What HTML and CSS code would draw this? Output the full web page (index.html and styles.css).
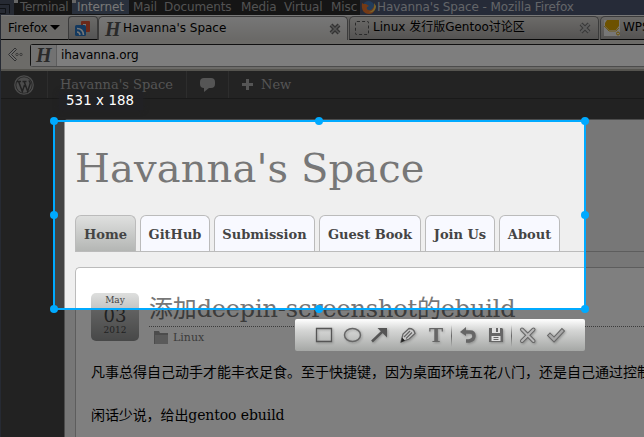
FILE: index.html
```html
<!DOCTYPE html>
<html lang="en">
<head>
<meta charset="utf-8">
<title>Havanna's Space</title>
<link rel="stylesheet" href="styles.css">
</head>
<body>
<div class="desktop">
  <header class="panel">
    <svg class="panel-glyph" width="14" height="15"><path d="M0 4.500h9.500v9M0 8.500h5.500v5H0" fill="none" stroke="#20242c"/></svg>
    <span class="tag w-terminal dot">Terminal</span>
    <span class="tag w-internet active dot">Internet</span>
    <span class="tag w-mail">Mail</span>
    <span class="tag w-docs">Documents</span>
    <span class="tag w-media">Media</span>
    <span class="tag w-virtual">Virtual</span>
    <span class="tag w-misc">Misc</span>
    <span class="window-title">
      <svg width="15" height="15" viewBox="0 0 15 15"><circle cx="7.500" cy="7" r="6" fill="#4578b5"/><path d="M1 3C0 10 3 14 8 14c5 0 7-5 5.500-10C13 7 12 9 10 10 7 11 5 9 6 7l2-1-3-2C3 4 2 4 1 3Z" fill="#e8742c"/><path d="M13 3c1 5-1 8-5 9 3 1 7-1 7-6Z" fill="#f5cb55"/></svg>
      <span>Havanna's Space - Mozilla Firefox</span>
    </span>
  </header>

  <main class="browser">
    <div class="tabs">
      <div class="menu-button">Firefox<i class="caret"></i></div>
      <div class="pin-tab">
        <svg width="16" height="17" viewBox="0 0 16 17"><path d="M7 1h7q1 0 1 1v9q0 1-1 1H8V8L6 6V2q0-1 1-1Z" fill="#d85235"/><path d="M8 4h3v3H8Z" fill="#eee"/><rect x="0" y="5" width="11" height="11" rx="1.500" fill="#2672bf"/><path d="M2 8.500q6 0 6.500 6.500M2 12q2.500 0 3 3" stroke="#eee" stroke-width="1.600" fill="none"/></svg>
      </div>
      <div class="tab tab-current"><b class="h-icon">H</b><span class="tab-name">Havanna's Space</span>
        <svg class="close" width="12" height="12" viewBox="0 0 12 12"><path d="M2 2l8 8M10 2L2 10" stroke="#666" stroke-width="4"/><path d="M2 2l8 8M10 2L2 10" stroke="#aaa" stroke-width="1.500"/></svg>
      </div>
      <div class="tab tab-linux"><i class="blank-icon"></i><span class="tab-name">Linux 发行版Gentoo讨论区</span>
        <svg class="close" width="12" height="12" viewBox="0 0 12 12"><path d="M2 2l8 8M10 2L2 10" stroke="#707070" stroke-width="4"/><path d="M2 2l8 8M10 2L2 10" stroke="#bbb" stroke-width="2"/></svg>
      </div>
      <div class="tab tab-wps">
        <svg width="16" height="16" viewBox="0 0 16 16"><path d="M0 0h16v16H0Z" fill="#eee"/><path d="M3 0h12v6l-3 4H5L1 6V3Z" fill="#dba400"/><path d="M0 6l5 5h7l3-3" fill="none" stroke="#dba400" stroke-width=".8"/><circle cx="14" cy="13.500" r="1.500" fill="none" stroke="#dba400"/></svg>
        <span class="tab-name">WPS</span>
      </div>
    </div>
    <div class="navbar">
      <svg class="back" width="17" height="16" viewBox="0 0 17 16"><path d="M8 1L1.500 7.500 8 14l1.500-1.500-5-5 5-5Z" fill="#ddd" stroke="#626262"/><circle cx="10" cy="7.500" r="1.200" fill="none" stroke="#777"/><circle cx="14" cy="7.500" r="1.200" fill="none" stroke="#777"/></svg>
      <div class="address"><b class="h-icon address-icon">H</b><span class="url">ihavanna.org</span></div>
    </div>

    <div class="adminbar">
      <div class="admin-logo">
        <svg width="20" height="20" viewBox="0 0 20 20"><circle cx="10" cy="10" r="9.200" fill="none" stroke="#999" stroke-width="1.300"/><circle cx="10" cy="10" r="7.700" fill="#999"/><path d="M3 6.500h4M8.500 6.500h4M4.800 7l3.500 9.500L10.500 10M10.300 7l3.400 9.500 2.500-8q0-2-1.500-3" fill="none" stroke="#444" stroke-width="1.500"/></svg>
      </div>
      <div class="admin-site">Havanna's Space</div>
      <div class="admin-comment"><svg width="15" height="14" viewBox="0 0 15 14"><path d="M4 0h7q4 0 4 4v2q0 4-4 4H9l-5 4v-4Q0 10 0 6V4Q0 0 4 0Z" fill="#aaa"/></svg></div>
      <div class="admin-new"><svg width="11" height="11" viewBox="0 0 11 11"><path d="M4 0h3v4h4v3H7v4H4V7H0V4h4Z" fill="#aaa"/></svg><span>New</span></div>
    </div>

    <div class="site">
      <h1 class="site-title">Havanna's Space</h1>
      <nav class="menu">
        <a class="item m-home">Home</a><a class="item m-github">GitHub</a><a class="item m-sub">Submission</a><a class="item m-guest">Guest Book</a><a class="item m-join">Join Us</a><a class="item m-about">About</a>
      </nav>
      <article class="post">
        <div class="post-head">
          <div class="date"><span class="month">May</span><span class="day">03</span><span class="year">2012</span></div>
          <div class="heading">
            <h2 class="post-title">添加deepin-screenshot的ebuild</h2>
            <div class="category">
              <svg width="14" height="13" viewBox="0 0 14 13"><path d="M0 0h5l1 2h8v11H0Z" fill="#999"/><path d="M1 4h13v9H1Z" fill="#b4b4b4"/></svg>
              <span>Linux</span>
            </div>
          </div>
        </div>
        <p class="para">凡事总得自己动手才能丰衣足食。至于快捷键，因为桌面环境五花八门，还是自己通过控制面板</p>
        <p class="para para-latin">闲话少说，给出gentoo ebuild</p>
      </article>
    </div>
  </main>
</div>

<div class="selection">
  <i class="handle nw"></i><i class="handle n"></i><i class="handle ne"></i>
  <i class="handle w"></i><i class="handle e"></i>
  <i class="handle sw"></i><i class="handle s"></i><i class="handle se"></i>
</div>
<div class="size-label">531 x 188</div>
<div class="toolbar">
  <svg class="tool" viewBox="0 0 28 32"><path d="M6.500 9.500h15v13h-15Z" fill="none" stroke="#555" stroke-width="1.300"/></svg>
  <svg class="tool" viewBox="0 0 28 32"><ellipse cx="14.500" cy="16" rx="8" ry="6.500" fill="none" stroke="#666" stroke-width="1.500"/></svg>
  <svg class="tool" viewBox="0 0 28 32"><path d="M6 22.500L17 12" stroke="#555" stroke-width="2.500"/><path d="M11.500 9H21v9.500Z" fill="#555"/></svg>
  <svg class="tool" viewBox="0 0 28 32"><path d="M7 23l2-8 6-5.500q5 0 6 5L15 20Z" fill="#ccc" stroke="#666" stroke-width="1.300"/><path d="M10 18l6-6M12 19.500l6-6" stroke="#666" stroke-width="1.300"/><path d="M7 23.500l1-5 3 3Z" fill="#222"/></svg>
  <span class="tool tool-text">T</span>
  <i class="separator"></i>
  <svg class="tool" viewBox="0 0 28 32"><path d="M11 13h5q4 0 4 4t-5 5h-3" fill="none" stroke="#666" stroke-width="3.500"/><path d="M6 13l6-5v9Z" fill="#666"/></svg>
  <svg class="tool" viewBox="0 0 28 32"><path d="M7 9h13l1 1v13H7Z" fill="#666"/><path d="M10 9h8v5h-8ZM9.500 17h9v5h-9Z" fill="#e0e0e0"/><path d="M14 9h2v4h-2Z" fill="#666"/><path d="M11.500 18.500h5M11.500 20.500h5" stroke="#666"/></svg>
  <i class="separator"></i>
  <svg class="tool" viewBox="0 0 28 32"><path d="M8 10.500l11.500 11.500M19.500 10.500L8 22" stroke="#666" stroke-width="4" stroke-linecap="round"/><path d="M8 10.500l11.500 11.500M19.500 10.500L8 22" stroke="#b8b8b8" stroke-width="2" stroke-linecap="round"/></svg>
  <svg class="tool" viewBox="0 0 28 32"><path d="M8 16.500l4 4 8-8.500" fill="none" stroke="#666" stroke-width="4.500" stroke-linecap="square"/><path d="M8 16.500l4 4 8-8.500" fill="none" stroke="#a8a8a8" stroke-width="2.500" stroke-linecap="square"/></svg>
</div>
</body>
</html>
```
FILE: styles.css
```css
* { box-sizing: border-box; }
body { margin: 0; width: 644px; height: 437px; overflow: hidden; position: relative; font-family: "DejaVu Sans", "Noto Sans CJK SC", sans-serif; font-size: 12px; }
.desktop { width: 644px; height: 437px; overflow: hidden; background: #4c5466; }
svg { display: block; flex: none; }

.panel { display: flex; height: 15px; background: #2a2a2a; color: #a5a5a5; line-height: 14px; white-space: nowrap; letter-spacing: -.1px; }
.panel-glyph { background: #4c5466; }
.tag { flex: none; height: 14px; padding-left: 5px; }
.w-terminal { width: 58px; padding-left: 6px; letter-spacing: -.3px; } .w-internet { width: 57px; } .w-mail { width: 31px; padding-left: 4px; }
.w-docs { width: 77px; padding-left: 4px; } .w-media { width: 43px; padding-left: 4px; } .w-virtual { width: 47px; padding-left: 4px; } .w-misc { width: 33px; padding-left: 4px; }
.dot { background-image: linear-gradient(#ccc, #ccc); background-size: 4px 3px; background-repeat: no-repeat; }
.active { background-color: #536078; color: #eee; }
.window-title { display: flex; flex: 1; background: #4c5670; color: #c6cad0; gap: 1px; padding-left: 1px; }

.browser { margin-left: 1px; background: #444; }
.tabs { display: flex; height: 25px; background: #c5c3bf; border-top: 1px solid #eee; align-items: flex-end; color: #000; overflow: hidden; }
.menu-button { flex: none; width: 67px; height: 24px; padding-left: 7px; display: flex; align-items: center; gap: 2px; border-bottom: 1px solid #111; background: #d6d4d0; }
.caret { border: 5px solid transparent; border-top: 5px solid #000; border-bottom: 0; }
.pin-tab { flex: none; width: 30px; height: 24px; border: 1px solid #777; border-bottom-color: #111; border-radius: 4px 4px 0 0; padding: 3px 6px; background: linear-gradient(#d6d4d0, #aaa); }
.tab { flex: none; height: 24px; border: 1px solid #777; border-bottom-color: #111; border-radius: 5px 5px 0 0; display: flex; align-items: center; background: linear-gradient(#d8d5d2, #aaa8a5); white-space: nowrap; overflow: hidden; }
.tab-name { line-height: 16px; height: 18px; }
.tab-current { width: 250px; background: linear-gradient(#eee, #d4d2ce); border-bottom: 0; padding-left: 6px; }
.tab-linux { width: 250px; margin-left: 1px; padding-left: 5px; }
.tab-wps { width: 60px; margin-left: 1px; padding-left: 3px; gap: 3px; }
.tab .close { margin-left: auto; margin-right: 6px; }
.tab-linux .close { margin-right: 7px; }
.h-icon { width: 14px; font: italic bold 20px/20px "Liberation Serif", serif; color: #555; }
.tab-current .h-icon { margin-right: 4px; }
.blank-icon { width: 14px; height: 14px; border: 1px dashed #555; border-radius: 2px; margin-right: 4px; }
.navbar { height: 31px; display: flex; background: #d8d6d0; border-bottom: 2px solid #aaa99f; padding-top: 4px; }
.back { margin: 3px 6px 0; }
.address { flex: 1; height: 23px; border: 1px solid #222; border-right: 0; border-radius: 3px 0 0 3px; border-bottom-color: #999; background: #fdfdfd; display: flex; }
.address-icon { width: 26px; padding-left: 5px; background: #e4e4e4; border-right: 1px solid #bbb; line-height: 21px; }
.url { padding-left: 4px; line-height: 20px; letter-spacing: -.1px; }

.adminbar { height: 28px; display: flex; background: #464646; border-bottom: 1px solid #333; color: #aaa; font: 13px/27px "DejaVu Serif", serif; white-space: nowrap; }
.adminbar > div { border-right: 1px solid #5a5a5a; flex: none; display: flex; align-items: center; }
.adminbar .admin-logo { width: 47px; padding-left: 13px; }
.adminbar .admin-site { width: 139px; padding-left: 12px; }
.adminbar .admin-comment { width: 42px; padding-left: 13px; }
.adminbar .admin-new { flex: 1; border: 0; padding-left: 13px; gap: 8px; }

.site { margin: 20px 0 0 63px; height: 331px; background: #efefef; border: 1px solid #999; border-right: 0; border-bottom: 0; border-radius: 4px 0 0 0; font-family: "DejaVu Serif", "Noto Sans CJK SC", serif; padding-left: 10px; }
.site-title { margin: 24px 0 0; font-size: 40px; font-weight: 400; line-height: 48px; letter-spacing: .13px; color: #777; white-space: nowrap; }
.menu { margin-top: 23px; height: 37px; display: flex; gap: 4px; border-bottom: 1px solid #bbb; }
.item { flex: none; height: 36px; border: 1px solid #bbb; border-bottom: 0; border-radius: 6px 6px 0 0; background: #f8f9ff; font-size: 13px; font-weight: 700; line-height: 37px; color: #444; text-align: center; white-space: nowrap; }
.m-home { width: 61px; background: linear-gradient(#dfe0df, #b4b6b4); } .m-github { width: 70px; } .m-sub { width: 101px; }
.m-guest { width: 102px; } .m-join { width: 70px; } .m-about { width: 61px; }
.post { margin-top: 15px; height: 190px; background: #fff; border: 1px solid #bbb; border-right: 0; border-radius: 5px 0 0 0; padding: 25px 0 0 15px; }
.post-head { display: flex; gap: 10px; height: 69px; }
.date { width: 48px; height: 48px; flex: none; border-radius: 5px; background: linear-gradient(#dedfde, #8f9090); color: #444; display: flex; flex-direction: column; align-items: center; }
.month { font-size: 9px; line-height: 14px; }
.day { font-size: 18px; line-height: 18px; }
.year { font-size: 9px; line-height: 10px; }
.heading { flex: 1; min-width: 0; }
.post-title { margin: 0; height: 34px; border-bottom: 1px dotted #777; font-size: 24px; font-weight: 400; line-height: 33px; letter-spacing: -.18px; color: #777; white-space: nowrap; }
.category { display: flex; align-items: center; gap: 5px; padding-left: 5px; height: 21px; font-size: 11px; color: #777; }
.para { margin: 0; height: 43px; line-height: 21px; font-size: 14px; color: #000; white-space: nowrap; }
.para-latin { letter-spacing: -.1px; }

.selection { position: absolute; left: 53px; top: 120px; width: 533px; height: 190px; border: 2px solid #00aaff; box-shadow: 0 0 0 1000px rgba(0,0,0,.5); }
.handle { position: absolute; width: 8px; height: 8px; border-radius: 50%; background: #00aaff; }
.nw, .w, .sw { left: -5px; } .n, .s { left: 260px; } .ne, .e, .se { right: -5px; }
.nw, .n, .ne { top: -5px; } .w, .e { top: 89px; } .sw, .s, .se { bottom: -5px; }
.size-label { position: absolute; left: 59px; top: 92px; width: 84px; height: 18px; padding-left: 7px; font-size: 13.33px; line-height: 18px; letter-spacing: .1px; color: #fff; background: rgba(33,33,36,.85); box-shadow: 0 0 5px rgba(33,33,36,.8); white-space: nowrap; }
.toolbar { position: absolute; left: 295px; top: 319px; width: 290px; height: 32px; padding-left: 15px; border-radius: 2px; background: linear-gradient(#fff, #d5d6d5 35%, #a5a7a5); display: flex; }
.tool { width: 28px; height: 32px; flex: none; filter: drop-shadow(1px 1px 1px rgba(0,0,0,.25)); }
.tool-text { text-align: center; font: bold 19px/32px "DejaVu Serif", serif; color: #666; }
.separator { width: 4px; height: 22px; margin-top: 6px; flex: none; background: linear-gradient(transparent, #666, transparent) 1px 0 / 1px 100% no-repeat; }
```
